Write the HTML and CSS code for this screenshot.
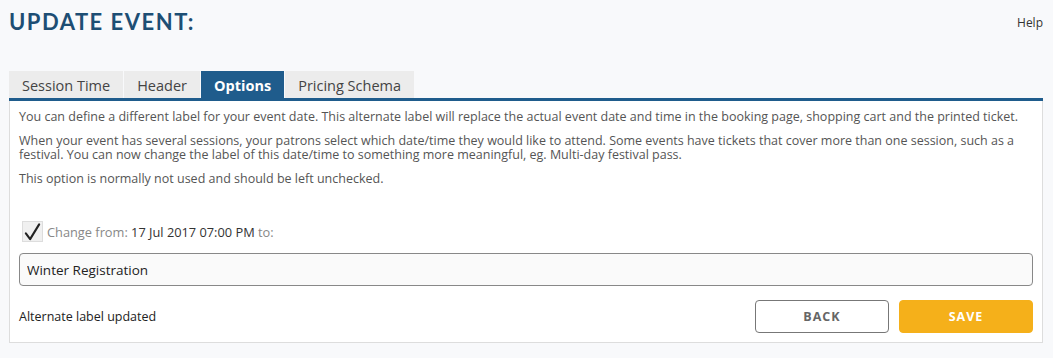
FILE: index.html
```html
<!DOCTYPE html>
<html lang="en">

<head>
    <meta charset="utf-8">
    <title>Update Event</title>
    <link rel="stylesheet" href="styles.css">
</head>

<body>
    <header class="page-header">
        <h1 class="page-title">Update Event:</h1>
        <a class="help-link" href="#">Help</a>
    </header>
    <main class="page">
        <nav class="tabs">
            <a class="tab" href="#">Session Time</a>
            <a class="tab" href="#">Header</a>
            <a class="tab tab-active" href="#">Options</a>
            <a class="tab" href="#">Pricing Schema</a>
        </nav>
        <section class="panel">
            <p>You can define a different label for your event date. This alternate label will replace the actual event date and time in the booking page, shopping cart and the printed ticket.</p>
            <p>When your event has several sessions, your patrons select which date/time they would like to attend. Some events have tickets that cover more than one session, such as a festival. You can now change the label of this date/time to something more meaningful, eg. Multi-day festival pass.</p>
            <p>This option is normally not used and should be left unchecked.</p>

            <label class="check-row">
                <span class="check-box">
                    <svg width="20" height="20" viewBox="0 0 20 20">
                        <path d="M3 11.5 L7.5 17.5 L17 2" fill="none" stroke="#222" stroke-width="2.2" stroke-linecap="round" stroke-linejoin="round" />
                    </svg>
                </span>
                <span class="check-label">Change from: <span class="date">17 Jul 2017 07:00 PM</span> to:</span>
            </label>
            <input class="text-input" type="text" value="Winter Registration">

            <div class="footer-row">
                <span class="status">Alternate label updated</span>
                <div class="buttons">
                    <button class="btn btn-back" type="button">Back</button>
                    <button class="btn btn-save" type="button">Save</button>
                </div>
            </div>
        </section>
    </main>
</body>

</html>
```

FILE: styles.css
```css
body {
    margin: 0;
    background-color: #f8f9fb;
    font-family: "Open Sans", Lato, sans-serif;
    color: #555555;
}

.page-header {
    display: flex;
    justify-content: space-between;
    align-items: flex-start;
    padding: 8px 10px 0 9px;
    height: 63px;
}

.page-title {
    margin: 0;
    font-family: Lato, sans-serif;
    font-size: 22px;
    font-weight: 700;
    letter-spacing: 1.5px;
    text-transform: uppercase;
    color: #1d4e74;
}

.help-link {
    margin-top: 6px;
    font-size: 12px;
    color: #333333;
    text-decoration: none;
}

.page {
    padding: 0 10px 0 9px;
}

.tabs {
    display: flex;
    gap: 1px;
    border-bottom: 3px solid #1f5c8c;
}

.tab {
    display: block;
    height: 27px;
    line-height: 29px;
    padding: 0 13px;
    background-color: #ececec;
    color: #444444;
    font-size: 14.5px;
    text-decoration: none;
}

.tab-active {
    background-color: #1f5c8c;
    color: white;
    font-weight: 700;
}

.panel {
    background-color: white;
    border: 1px solid #dddddd;
    border-top: none;
    padding: 9px 9px 9px 9px;
    font-size: 12.5px;
}

.panel p {
    margin: 0 0 10px 0;
    line-height: 14px;
}

.check-row {
    display: flex;
    align-items: center;
    gap: 4px;
    margin-top: 35px;
    margin-left: 3px;
}

.check-box {
    display: flex;
    align-items: center;
    justify-content: center;
    width: 19px;
    height: 19px;
    background-color: #f0f0f0;
    border: 1px solid #dddddd;
}

.check-label {
    color: #888888;
    font-size: 12.8px;
}

.date {
    color: #333333;
}

.text-input {
    display: block;
    box-sizing: border-box;
    width: 100%;
    height: 33px;
    margin-top: 11px;
    padding: 0 7px;
    border: 1px solid #888888;
    border-radius: 4px;
    background-color: #fafafa;
    font-family: inherit;
    font-size: 13.5px;
    color: #222222;
}

.footer-row {
    display: flex;
    justify-content: space-between;
    align-items: center;
    margin-top: 14px;
}

.status {
    color: #222222;
    font-size: 12.5px;
}

.buttons {
    display: flex;
    gap: 10px;
}

.btn {
    width: 134px;
    height: 33px;
    border-radius: 4px;
    font-family: inherit;
    font-size: 12.5px;
    font-weight: 700;
    letter-spacing: 1px;
    text-transform: uppercase;
}

.btn-back {
    background-color: white;
    border: 1px solid #777777;
    color: #666666;
}

.btn-save {
    background-color: #f5b01a;
    border: 1px solid #f5b01a;
    color: white;
}
```
